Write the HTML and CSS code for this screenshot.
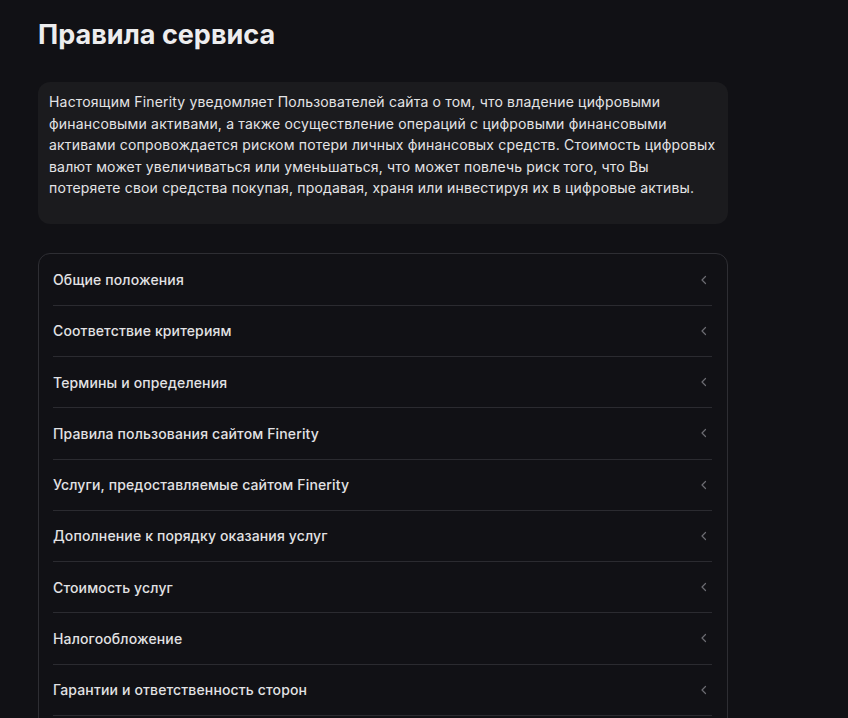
FILE: index.html
```html
<!DOCTYPE html>
<html lang="ru">
<head>
  <meta charset="UTF-8">
  <meta name="viewport" content="width=device-width, initial-scale=1.0">
  <title>Правила сервиса</title>
  <link rel="stylesheet" href="styles.css">
</head>
<body>
  <main class="page">
    <h1 class="page-title">Правила сервиса</h1>

    <!-- предупреждение о рисках -->
    <div class="notice">
      <p>Настоящим Finerity уведомляет Пользователей сайта о том, что владение цифровыми финансовыми активами, а также осуществление операций с цифровыми финансовыми активами сопровождается риском потери личных финансовых средств. Стоимость цифровых валют может увеличиваться или уменьшаться, что может повлечь риск того, что Вы потеряете свои средства покупая, продавая, храня или инвестируя их в цифровые активы.</p>
    </div>

    <!-- разделы правил -->
    <ul class="rules">
      <li class="rule"><span>Общие положения</span><svg class="chevron" viewBox="0 0 16 16"><path d="M9.5 4.5 6 8l3.5 3.5"/></svg></li>
      <li class="rule"><span>Соответствие критериям</span><svg class="chevron" viewBox="0 0 16 16"><path d="M9.5 4.5 6 8l3.5 3.5"/></svg></li>
      <li class="rule"><span>Термины и определения</span><svg class="chevron" viewBox="0 0 16 16"><path d="M9.5 4.5 6 8l3.5 3.5"/></svg></li>
      <li class="rule"><span>Правила пользования сайтом Finerity</span><svg class="chevron" viewBox="0 0 16 16"><path d="M9.5 4.5 6 8l3.5 3.5"/></svg></li>
      <li class="rule"><span>Услуги, предоставляемые сайтом Finerity</span><svg class="chevron" viewBox="0 0 16 16"><path d="M9.5 4.5 6 8l3.5 3.5"/></svg></li>
      <li class="rule"><span>Дополнение к порядку оказания услуг</span><svg class="chevron" viewBox="0 0 16 16"><path d="M9.5 4.5 6 8l3.5 3.5"/></svg></li>
      <li class="rule"><span>Стоимость услуг</span><svg class="chevron" viewBox="0 0 16 16"><path d="M9.5 4.5 6 8l3.5 3.5"/></svg></li>
      <li class="rule"><span>Налогообложение</span><svg class="chevron" viewBox="0 0 16 16"><path d="M9.5 4.5 6 8l3.5 3.5"/></svg></li>
      <li class="rule"><span>Гарантии и ответственность сторон</span><svg class="chevron" viewBox="0 0 16 16"><path d="M9.5 4.5 6 8l3.5 3.5"/></svg></li>
      <li class="rule"><span>Заключительные положения</span><svg class="chevron" viewBox="0 0 16 16"><path d="M9.5 4.5 6 8l3.5 3.5"/></svg></li>
    </ul>
  </main>
</body>
</html>
```

FILE: styles.css
```css
/* общий сброс */
* { margin: 0; padding: 0; box-sizing: border-box; }
body {
  font-family: Inter, 'Liberation Sans', sans-serif;
  background: #111115;
  color: #e6e6e8;
  overflow: hidden;
}
.page {
  width: 690px;
  margin-left: 38px;
  padding-top: 18px;
}
.page-title {
  font-size: 27px;
  font-weight: 700;
  line-height: 34px;
  color: #ededee;
  margin-bottom: 30px;
}
.notice {
  background: #1b1b1e;
  border-radius: 12px;
  padding: 9px 10px 25px 11px;
  margin-bottom: 29px;
}
.notice p {
  font-size: 14px;
  line-height: 21.5px;
  letter-spacing: 0.18px;
  color: #e4e4e6;
}
.rules {
  list-style: none;
  border: 1px solid #2e2e33;
  border-radius: 12px;
  padding: 1px 15px 0 14px;
}
.rule {
  height: 51.25px;
  display: flex;
  align-items: center;
  justify-content: space-between;
  border-bottom: 1px solid #2b2b30;
  font-size: 14px;
  font-weight: 500;
  letter-spacing: 0.14px;
  color: #e2e2e4;
}
.chevron {
  width: 16px;
  height: 16px;
  fill: none;
  stroke: #6c6c72;
  stroke-width: 1.2;
  stroke-linecap: round;
  stroke-linejoin: round;
}
```
